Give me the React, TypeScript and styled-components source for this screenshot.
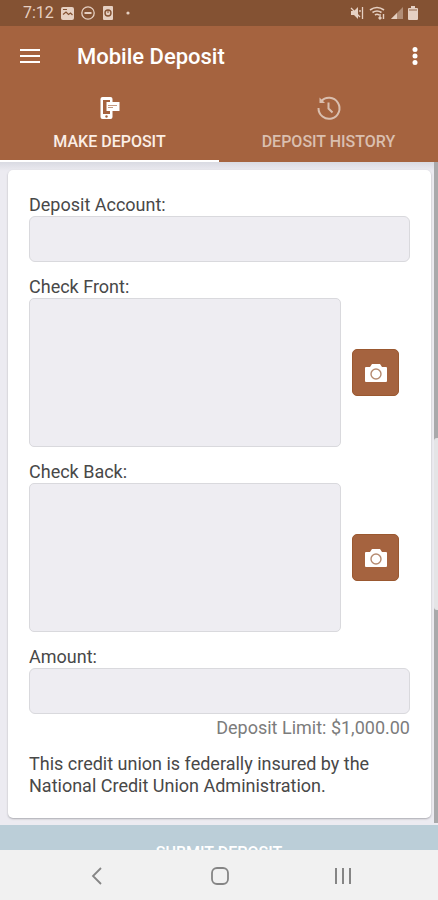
import React from "react";
import styled, { createGlobalStyle } from "styled-components";

const brand = "#a5633f";

const GlobalStyle = createGlobalStyle`
  * { box-sizing: border-box; }
  body { margin: 0; background: #f1f1f1; font-family: Roboto, "Liberation Sans", sans-serif; }
  button, input { font: inherit; }
`;

const Screen = styled.div`
  display: flex;
  flex-direction: column;
  height: 100vh;
  overflow: hidden;
`;

const StatusBar = styled.div`
  display: flex;
  align-items: center;
  justify-content: space-between;
  height: 26px;
  flex-shrink: 0;
  padding: 0 20px 0 23px;
  background: #845233;
  color: #e6d0c2;
`;

const StatusGroup = styled.div<{ $gap: number }>`
  display: flex;
  align-items: center;
  gap: ${(p) => p.$gap}px;
  svg { display: block; }
`;

const Clock = styled.span`
  font-size: 16px;
  line-height: 24px;
`;

const Header = styled.header`
  flex-shrink: 0;
  background: ${brand};
  color: #fff;
`;

const TitleRow = styled.div`
  display: flex;
  align-items: center;
  height: 60px;
  padding: 2px 11px 0 18px;
`;

const IconButton = styled.button`
  display: flex;
  padding: 0;
  border: 0;
  background: none;
  color: inherit;
`;

const Title = styled.h1`
  flex: 1;
  margin: 0 0 0 35px;
  font-size: 22px;
  font-weight: 500;
  line-height: 28px;
`;

const Tabs = styled.div`
  display: grid;
  grid-template-columns: 1fr 1fr;
`;

const Tab = styled.button<{ $active?: boolean }>`
  display: flex;
  flex-direction: column;
  align-items: center;
  gap: 8px;
  height: 76px;
  padding: 8px 0 0;
  border: 0;
  border-bottom: 2px solid ${(p) => (p.$active ? "#fff" : brand)};
  background: none;
  color: ${(p) => (p.$active ? "#fbeee6" : "#dabfaf")};
  font-size: 16px;
  font-weight: 500;
  line-height: 24px;
  white-space: nowrap;
`;

const Main = styled.main`
  flex: 1;
  min-height: 0;
  overflow: hidden;
  background: #ecebf1;
`;

const ScrollArea = styled.div`
  display: flex;
  gap: 3px;
  background: linear-gradient(#d9dae2, #ecebf1 9px);
`;

const Card = styled.form`
  flex: 1;
  min-width: 0;
  margin: 8px 0 7px 8px;
  padding: 24px 21px 21px;
  border-radius: 5px;
  background: #fff;
  box-shadow: 0 1px 2px #aaaab0;
  color: #484848;
  font-size: 18px;
  line-height: 22px;
`;

const Field = styled.div`
  display: flex;
  flex-direction: column;
  margin-bottom: 14px;
`;

const TextBox = styled.input`
  width: 100%;
  height: 46px;
  padding: 0 12px;
  border: 1px solid #d9d9dd;
  border-radius: 6px;
  background: #eeedf2;
`;

const PhotoRow = styled.div`
  display: flex;
  align-items: center;
  gap: 11px;
  padding-right: 11px;
`;

const PhotoArea = styled.div`
  flex: 1;
  height: 149px;
  border: 1px solid #d9d9dd;
  border-radius: 5px;
  background: #eeedf2;
`;

const CameraButton = styled.button`
  display: flex;
  align-items: center;
  justify-content: center;
  width: 47px;
  height: 47px;
  padding: 0;
  border: 1px solid #9a5830;
  border-radius: 5px;
  background: ${brand};
`;

const Limit = styled.p`
  margin: 3px 0 0;
  color: #7c7c7c;
  text-align: right;
`;

const Notice = styled.p`
  margin: 0;
`;

const Track = styled.div`
  display: flex;
  flex-direction: column;
  width: 4px;
  margin-bottom: 2px;
  background: #a9a9ab;
`;

const Thumb = styled.div`
  height: 172px;
  margin-top: 276px;
  border-radius: 3px 0 0 3px;
  background: #e4e4e6;
`;

const Submit = styled.button`
  width: 100%;
  height: 54px;
  border: 0;
  background: #bbced8;
  color: #fff;
  font-size: 16px;
  font-weight: 500;
`;

const SystemNav = styled.nav`
  display: flex;
  align-items: center;
  justify-content: center;
  gap: 99px;
  height: 50px;
  flex-shrink: 0;
  padding: 2px 0 0 2px;
  background: #f1f1f1;
  color: #858585;
`;

const Camera = () => (
  <svg width="24" height="20" viewBox="0 0 24 20" aria-hidden="true">
    <path d="M2 4h4l2-3h8l2 3h4q1 0 1 1v13q0 1-1 1H2q-1 0-1-1V5q0-1 1-1z" fill="#fff" />
    <circle cx="12" cy="11" r="5" fill="#fff" stroke="#b58a70" strokeWidth="1.4" />
  </svg>
);

const PhotoField = ({ label }: { label: string }) => (
  <Field>
    <span>{label}:</span>
    <PhotoRow>
      <PhotoArea role="img" aria-label={label} />
      <CameraButton type="button" aria-label={`Take photo: ${label}`}>
        <Camera />
      </CameraButton>
    </PhotoRow>
  </Field>
);

export default function App() {
  return (
    <>
      <GlobalStyle />
      <Screen>
        <StatusBar>
          <StatusGroup $gap={7}>
            <Clock>7:12</Clock>
            <svg width="13" height="13" viewBox="0 0 13 13">
              <rect width="13" height="13" rx="2" fill="currentColor" />
              <path d="M2 7.5 5 5l2.500 2.500L9.500 6l2 2" fill="none" stroke="#845233" strokeWidth="1.2" />
              <path d="M2 2.5h4" stroke="#845233" strokeWidth="1" />
            </svg>
            <svg width="14" height="14" viewBox="0 0 14 14" fill="none" stroke="currentColor">
              <circle cx="7" cy="7" r="6.2" strokeWidth="1.3" />
              <path d="M3.5 7h7" strokeWidth="2" />
            </svg>
            <svg width="12" height="14" viewBox="0 0 12 14">
              <rect x="1" width="10" height="14" rx="1" fill="currentColor" />
              <circle cx="6" cy="7" r="3" fill="none" stroke="#845233" strokeWidth="1.4" />
              <path d="M6 4V7" stroke="#845233" />
            </svg>
            <svg width="14" height="4" viewBox="0 0 14 4">
              <circle cx="7" cy="2" r="1.6" fill="currentColor" />
            </svg>
          </StatusGroup>
          <StatusGroup $gap={5}>
            <svg width="14" height="14" viewBox="0 0 14 14" fill="none" stroke="currentColor">
              <path d="M1 5h3l4-4v12L4 9H1z" fill="currentColor" stroke="none" />
              <path d="m1 2 9 9M12.5 1v12M10 4v2" strokeWidth="1.3" />
            </svg>
            <svg width="17" height="14" viewBox="0 0 17 14" fill="none" stroke="currentColor">
              <path d="M1 4q7-5 14 0M3.5 6.5q4.500-3 9 0M6 9q2-1.500 4 0" strokeWidth="1.7" />
              <path d="M11 8v5m-1.500-1.500L11 13l1.500-1.500M14.500 13V8" strokeWidth="1.4" />
            </svg>
            <svg width="12" height="14" viewBox="0 0 12 14">
              <path d="M0 13 12 1v12z" fill="#b18d76" />
              <path d="M0 13 6 7v6z" fill="currentColor" />
            </svg>
            <svg width="10" height="14" viewBox="0 0 10 14">
              <path d="M3 0h4v2h2q1 0 1 1v10q0 1-1 1H1q-1 0-1-1V3q0-1 1-1h2z" fill="currentColor" />
              <path d="M1 3h8v2H1z" fill="#bd9c87" />
            </svg>
          </StatusGroup>
        </StatusBar>

        <Header>
          <TitleRow>
            <IconButton type="button" aria-label="Menu">
              <svg width="24" height="24" viewBox="0 0 24 24" stroke="currentColor" strokeWidth="2">
                <path d="M2 5h20M2 11h20M2 17h20" />
              </svg>
            </IconButton>
            <Title>Mobile Deposit</Title>
            <IconButton type="button" aria-label="More options">
              <svg width="24" height="24" viewBox="0 0 24 24" fill="currentColor">
                <circle cx="12" cy="4.500" r="2.500" />
                <circle cx="12" cy="11" r="2.500" />
                <circle cx="12" cy="17.500" r="2.500" />
              </svg>
            </IconButton>
          </TitleRow>
          <Tabs role="tablist">
            <Tab type="button" role="tab" aria-selected="true" $active>
              <svg width="24" height="28" viewBox="0 0 24 28">
                <path d="M4.500 3h8q2 0 2 2v3h7v9h-7v6q0 2-2 2h-8q-2 0-2-2V5q0-2 2-2z" fill="#fff" />
                <path d="M5 6h7v2H8.500v9H12v3H5z" fill={brand} />
                <path d="M10 11.500h9M10 13.500h5" stroke="#c49a82" />
                <circle cx="8.500" cy="22.500" r="1.200" fill={brand} />
              </svg>
              <span>MAKE DEPOSIT</span>
            </Tab>
            <Tab type="button" role="tab" aria-selected="false">
              <svg width="28" height="28" viewBox="0 0 28 28" fill="none" stroke="currentColor" strokeWidth="2">
                <path d="M3.500 14A10.500 10.500 0 1 0 6 7.500" />
                <path d="M13.500 8.500v6l4 4" />
                <path d="M4.500 3.500v5.500h5.500z" fill="currentColor" stroke="none" />
              </svg>
              <span>DEPOSIT HISTORY</span>
            </Tab>
          </Tabs>
        </Header>

        <Main>
          <ScrollArea>
            <Card id="deposit-form">
              <Field>
                <label htmlFor="account">Deposit Account:</label>
                <TextBox id="account" />
              </Field>
              <PhotoField label="Check Front" />
              <PhotoField label="Check Back" />
              <Field>
                <label htmlFor="amount">Amount:</label>
                <TextBox id="amount" inputMode="decimal" />
                <Limit>Deposit Limit: $1,000.00</Limit>
              </Field>
              <Notice>
                This credit union is federally insured by the National Credit Union Administration.
              </Notice>
            </Card>
            <Track>
              <Thumb />
            </Track>
          </ScrollArea>
          <Submit type="submit" form="deposit-form">SUBMIT DEPOSIT</Submit>
        </Main>

        <SystemNav aria-label="System">
          <IconButton type="button" aria-label="Back">
            <svg width="24" height="24" viewBox="0 0 24 24" fill="none" stroke="currentColor" strokeWidth="1.8">
              <path d="M16 4 8 12l8 8" />
            </svg>
          </IconButton>
          <IconButton type="button" aria-label="Home">
            <svg width="24" height="24" viewBox="0 0 24 24" fill="none" stroke="currentColor" strokeWidth="1.8">
              <rect x="4" y="4" width="16" height="16" rx="5" />
            </svg>
          </IconButton>
          <IconButton type="button" aria-label="Recent apps">
            <svg width="24" height="24" viewBox="0 0 24 24" fill="none" stroke="currentColor" strokeWidth="2">
              <path d="M5 4v16M12 4v16M19 4v16" />
            </svg>
          </IconButton>
        </SystemNav>
      </Screen>
    </>
  );
}
